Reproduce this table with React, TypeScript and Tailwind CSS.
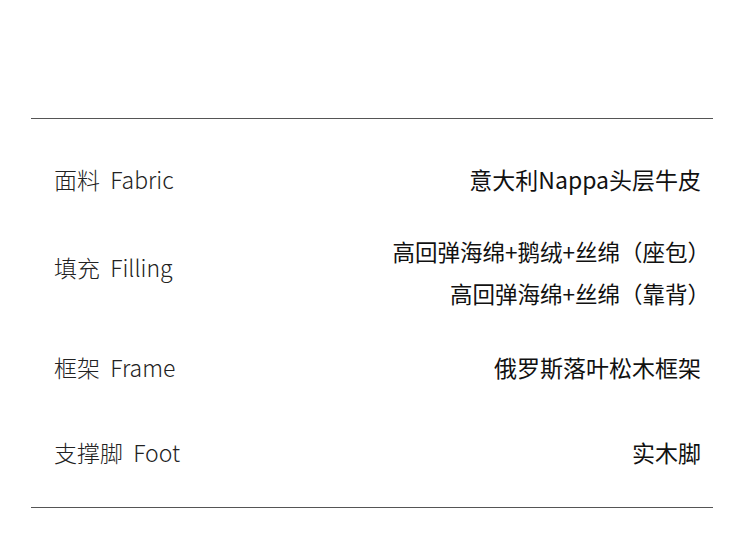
import React from "react";

const font = { fontFamily: '"Noto Sans CJK SC", "Noto Sans", sans-serif' };

const Label = ({ cn, en }: { cn: string; en: string }) => (
  <div className="text-[23px] font-light text-[#222] whitespace-pre">
    {cn}  {en}
  </div>
);

const App: React.FC = () => {
  return (
    <div className="w-[750px] h-[554px] bg-white pt-[118px] pl-[31px] pr-[37px]" style={font}>
      <div className="border-t border-b border-[#555] pl-[23px] pr-[12px] pb-[40px]">
        <div className="flex justify-between items-center h-[30px] leading-[30px] mt-[45px]">
          <Label cn="面料" en="Fabric" />
          <div className="text-[23px] font-normal text-[#111]">意大利Nappa头层牛皮</div>
        </div>

        <div className="flex justify-between items-start mt-[36px]">
          <div className="mt-[16px] leading-[42px]">
            <Label cn="填充" en="Filling" />
          </div>
          <div className="text-[22.5px] font-normal text-[#111] leading-[42px] text-right -mr-[9px]">
            <div>高回弹海绵+鹅绒+丝绵（座包）</div>
            <div>高回弹海绵+丝绵（靠背）</div>
          </div>
        </div>

        <div className="flex justify-between items-center h-[30px] leading-[30px] mt-[38px]">
          <Label cn="框架" en="Frame" />
          <div className="text-[23px] font-normal text-[#111]">俄罗斯落叶松木框架</div>
        </div>

        <div className="flex justify-between items-center h-[30px] leading-[30px] mt-[55px]">
          <Label cn="支撑脚" en="Foot" />
          <div className="text-[23px] font-normal text-[#111]">实木脚</div>
        </div>
      </div>
    </div>
  );
};

export default App;
